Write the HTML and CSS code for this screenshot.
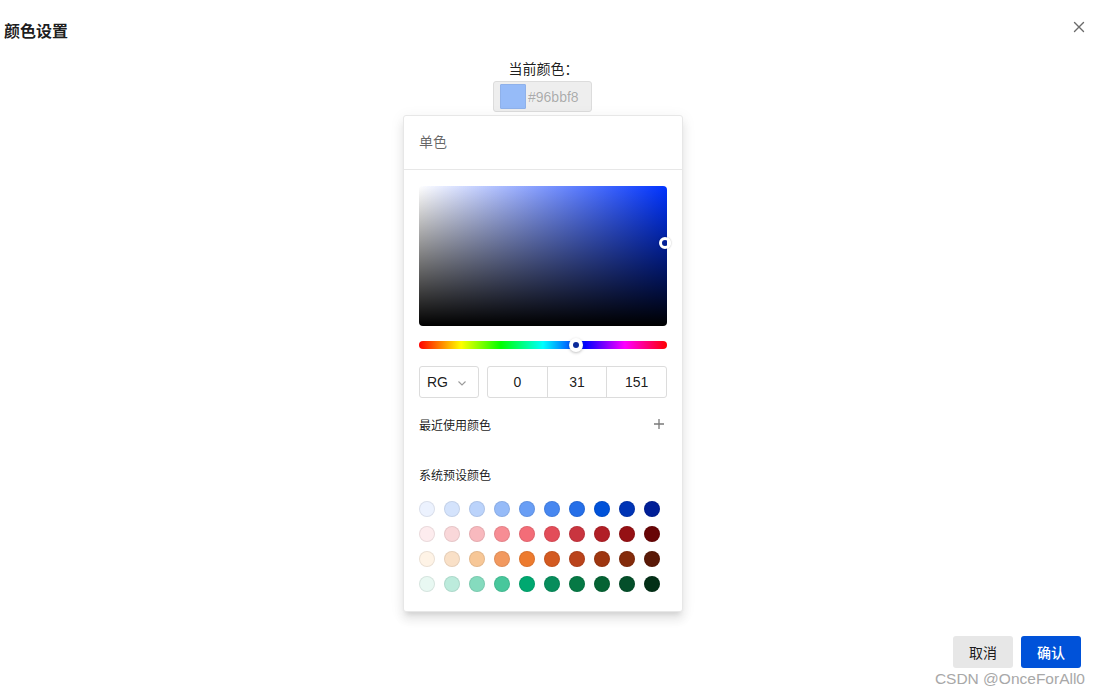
FILE: index.html
```html
<!DOCTYPE html>
<html lang="zh">
<head>
<meta charset="utf-8">
<title>颜色设置</title>
<link rel="stylesheet" href="styles.css">
</head>
<body>
<div class="page">
  <header class="top">
    <h1 class="title">颜色设置</h1>
    <button class="close" aria-label="关闭">
      <svg width="16" height="16" viewBox="0 0 16 16"><path d="M3.5 3.5 L12.5 12.5 M12.5 3.5 L3.5 12.5" stroke="#6b6b6b" stroke-width="1.4" fill="none" stroke-linecap="round"/></svg>
    </button>
  </header>

  <main class="center">
    <div class="cur-label">当前颜色：</div>
    <div class="cur-input"><span class="cur-swatch"></span><span class="cur-text">#96bbf8</span></div>

    <div class="panel">
      <div class="panel-head">单色</div>
      <div class="panel-body">
        <div class="sv"><span class="sv-thumb"></span></div>
        <div class="hue"><span class="hue-thumb"></span></div>
        <div class="inputs">
          <div class="select">
            <span>RG</span>
            <svg width="12" height="12" viewBox="0 0 12 12"><path d="M2.5 4.5 L6 8 L9.5 4.5" stroke="#9a9a9a" stroke-width="1.1" fill="none"/></svg>
          </div>
          <div class="group">
            <div class="cell">0</div>
            <div class="cell">31</div>
            <div class="cell">151</div>
          </div>
        </div>
        <div class="sec-row recent">
          <span>最近使用颜色</span>
          <svg width="12" height="12" viewBox="0 0 12 12"><path d="M6 1 V11 M1 6 H11" stroke="#7a7a7a" stroke-width="1.3" fill="none"/></svg>
        </div>
        <div class="sec-row preset"><span>系统预设颜色</span></div>
        <div class="swatches">
          <span class="sw" style="background:#ecf2fe"></span><span class="sw" style="background:#d4e3fc"></span><span class="sw" style="background:#bbd3fb"></span><span class="sw" style="background:#96bbf8"></span><span class="sw" style="background:#699ef5"></span><span class="sw" style="background:#4787f0"></span><span class="sw" style="background:#266fe8"></span><span class="sw" style="background:#0052d9"></span><span class="sw" style="background:#0034b5"></span><span class="sw" style="background:#001f97"></span>
          <span class="sw" style="background:#fdecee"></span><span class="sw" style="background:#f9d7d9"></span><span class="sw" style="background:#f8b9be"></span><span class="sw" style="background:#f78d94"></span><span class="sw" style="background:#f36d78"></span><span class="sw" style="background:#e34d59"></span><span class="sw" style="background:#c9353f"></span><span class="sw" style="background:#b11f26"></span><span class="sw" style="background:#951114"></span><span class="sw" style="background:#680506"></span>
          <span class="sw" style="background:#fef3e6"></span><span class="sw" style="background:#f9e0c7"></span><span class="sw" style="background:#f7c797"></span><span class="sw" style="background:#f2995f"></span><span class="sw" style="background:#ed7b2f"></span><span class="sw" style="background:#d35a21"></span><span class="sw" style="background:#ba431b"></span><span class="sw" style="background:#9e3610"></span><span class="sw" style="background:#842b0b"></span><span class="sw" style="background:#5a1907"></span>
          <span class="sw" style="background:#e8f8f2"></span><span class="sw" style="background:#bcebdc"></span><span class="sw" style="background:#85dbbe"></span><span class="sw" style="background:#48c79c"></span><span class="sw" style="background:#00a870"></span><span class="sw" style="background:#078d5c"></span><span class="sw" style="background:#067945"></span><span class="sw" style="background:#056334"></span><span class="sw" style="background:#044f2a"></span><span class="sw" style="background:#033017"></span>
        </div>
      </div>
    </div>
  </main>

  <footer class="foot">
    <button class="btn btn-cancel">取消</button>
    <button class="btn btn-ok">确认</button>
  </footer>

  <div class="watermark">CSDN @OnceForAll0</div>
</div>
</body>
</html>
```

FILE: styles.css
```css
* { box-sizing: border-box; }
html, body { margin: 0; padding: 0; background: #fff; }
body {
  font-family: "Liberation Sans", "Noto Sans CJK SC", sans-serif;
  color: rgba(0,0,0,0.9);
  font-size: 14px;
}
.page {
  position: relative;
  height: 694px;
  display: flex;
  flex-direction: column;
  overflow: hidden;
}
.top {
  display: flex;
  justify-content: space-between;
  align-items: flex-start;
  padding: 20px 12px 0 4px;
  height: 44px;
}
.title {
  margin: 0;
  font-size: 16px;
  line-height: 24px;
  font-weight: 700;
  color: rgba(0,0,0,0.9);
}
.close {
  border: 0;
  background: none;
  padding: 0;
  width: 16px;
  height: 16px;
  margin-top: -1px;
  display: flex;
}
.center {
  display: flex;
  flex-direction: column;
  align-items: center;
  padding-right: 13px;
}
.cur-label {
  margin-top: 14px;
  line-height: 22px;
  height: 22px;
  font-size: 14px;
  color: rgba(0,0,0,0.9);
  padding-left: 1px;
}
.cur-input {
  margin-top: 1px;
  width: 99px;
  height: 31px;
  background: #eeeeee;
  border: 1px solid #dcdcdc;
  border-radius: 3px;
  display: flex;
  align-items: center;
  padding-left: 6px;
  gap: 2px;
  margin-left: -1px;
}
.cur-swatch {
  width: 26px;
  height: 25px;
  background: #96bbf8;
  border: 1px solid #8fb1ea;
  border-radius: 1px;
}
.cur-text {
  color: rgba(0,0,0,0.3);
  font-size: 14px;
}
.panel {
  margin-top: 3px;
  width: 280px;
  background: #fff;
  border: 1px solid #e7e7e7;
  border-radius: 3px;
  box-shadow: 0 3px 14px 2px rgba(0,0,0,0.05), 0 8px 10px 1px rgba(0,0,0,0.06), 0 5px 5px -3px rgba(0,0,0,0.1);
}
.panel-head {
  height: 54px;
  line-height: 53px;
  padding: 0 15px;
  border-bottom: 1px solid #e7e7e7;
  font-size: 14px;
  color: rgba(0,0,0,0.6);
}
.panel-body {
  padding: 16px 15px 19px;
}
.sv {
  position: relative;
  height: 140px;
  border-radius: 4px;
  background: linear-gradient(to top, #000, rgba(0,0,0,0)), linear-gradient(to right, #fff, hsl(228, 100%, 50%));
}
.sv-thumb {
  position: absolute;
  left: 246px;
  top: 57px;
  width: 12px;
  height: 12px;
  margin: -6px 0 0 -6px;
  border: 3px solid #fff;
  border-radius: 50%;
  box-shadow: 0 0 2px rgba(0,0,0,0.3);
}
.hue {
  position: relative;
  margin-top: 15px;
  height: 8px;
  border-radius: 4px;
  background: linear-gradient(to right, #f00 0%, #ff0 17%, #0f0 33%, #0ff 50%, #00f 67%, #f0f 83%, #f00 100%);
}
.hue-thumb {
  position: absolute;
  left: 157px;
  top: 4px;
  width: 14px;
  height: 14px;
  margin: -7px 0 0 -7px;
  border-radius: 50%;
  background: #fff;
  box-shadow: 0 1px 3px rgba(0,0,0,0.25);
  display: flex;
  align-items: center;
  justify-content: center;
}
.hue-thumb::after {
  content: "";
  width: 6px;
  height: 6px;
  border-radius: 50%;
  background: #0a2a9a;
}
.inputs {
  margin-top: 17px;
  display: flex;
  gap: 8px;
  height: 32px;
}
.select {
  width: 60px;
  border: 1px solid #dcdcdc;
  border-radius: 3px;
  display: flex;
  align-items: center;
  justify-content: space-between;
  padding: 0 10px 0 7px;
  font-size: 14px;
}
.select svg { margin-top: 1px; }
.group {
  flex: 1;
  display: flex;
  border: 1px solid #dcdcdc;
  border-radius: 3px;
}
.cell {
  flex: 1;
  display: flex;
  align-items: center;
  justify-content: center;
  font-size: 14px;
}
.cell + .cell { border-left: 1px solid #dcdcdc; }
.sec-row {
  display: flex;
  justify-content: space-between;
  align-items: center;
  height: 22px;
  font-size: 12px;
  color: rgba(0,0,0,0.9);
}
.sec-row svg { margin-right: 2px; }
.recent { margin-top: 15px; }
.preset { margin-top: 28px; }
.swatches {
  margin-top: 16px;
  display: grid;
  grid-template-columns: repeat(10, 16px);
  column-gap: 9px;
  row-gap: 9px;
}
.sw {
  width: 16px;
  height: 16px;
  border-radius: 50%;
  box-shadow: inset 0 0 0 1px rgba(0,0,0,0.08);
}
.foot {
  margin-top: auto;
  display: flex;
  justify-content: flex-end;
  gap: 8px;
  padding: 0 18px 26px;
}
.btn {
  width: 60px;
  height: 32px;
  border: 0;
  border-radius: 3px;
  font-family: "Noto Sans CJK SC", sans-serif;
  font-size: 14px;
  cursor: pointer;
}
.btn-cancel { background: #e7e7e7; color: rgba(0,0,0,0.9); }
.btn-ok { background: #0052d9; color: #fff; font-weight: 500; }
.watermark {
  position: absolute;
  right: 14px;
  bottom: 5px;
  font-size: 15.5px;
  color: #a8a8a8;
  font-family: "Liberation Sans", sans-serif;
  line-height: 20px;
}
```
